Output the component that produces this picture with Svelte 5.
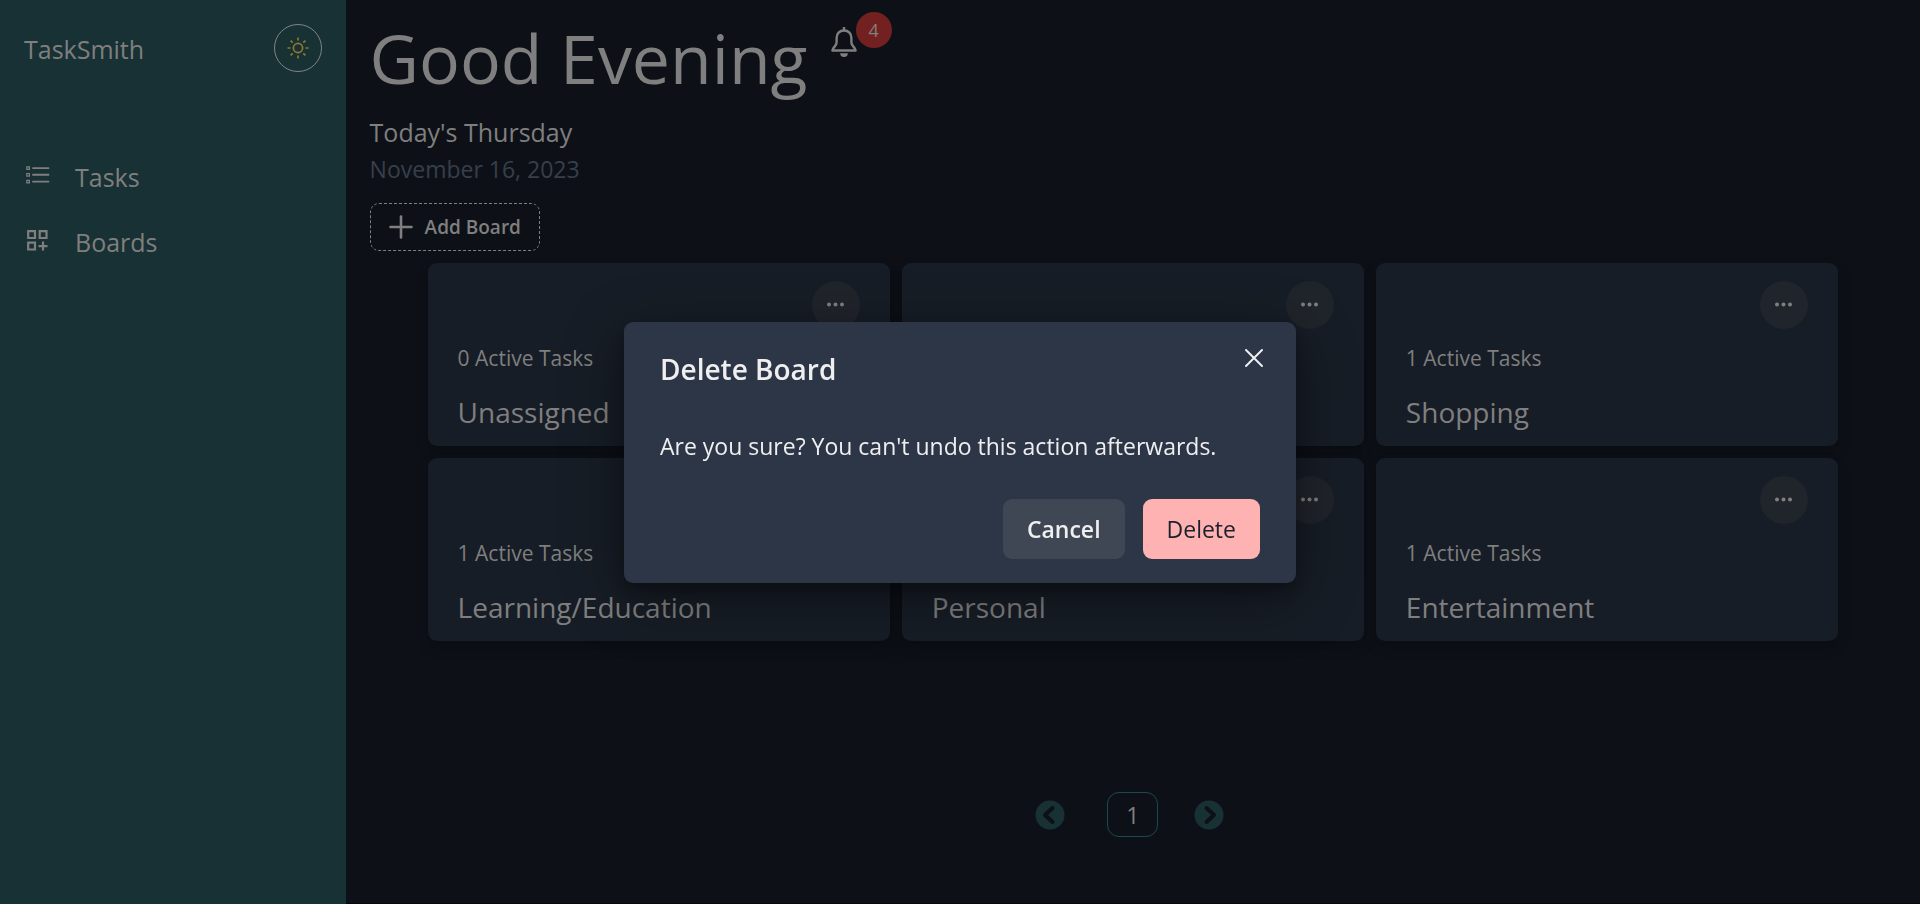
<script>
  const boards = [
    { name: 'Unassigned', tasks: 0 },
    null,
    { name: 'Shopping', tasks: 1 },
    { name: 'Learning/Education', tasks: 1 },
    { name: 'Personal' },
    { name: 'Entertainment', tasks: 1 }
  ];
</script>

<div class="app">
  <aside class="sidebar">
    <div class="brand">
      <span class="logo">TaskSmith</span>
      <button class="theme" aria-label="Toggle theme">
        <svg width="24" height="24" viewBox="0 0 24 24" fill="none" stroke="currentColor" stroke-width="1.7">
          <circle cx="12" cy="12" r="4.6" />
          <path d="M12 1.500v3M12 19.500v3M1.500 12h3M19.500 12h3M4.600 4.600l2.100 2.100M17.300 17.300l2.100 2.100M4.600 19.400l2.100-2.100M17.300 6.700l2.100-2.100" />
        </svg>
      </button>
    </div>
    <nav>
      <a href="#tasks">
        <svg width="27" height="28" viewBox="0 0 27 28" fill="none" stroke="currentColor">
          <path stroke-width="1.2" d="M2.800 3.800h2.600v2.600H2.800zM2.800 10.500h2.600v2.600H2.800zM2.800 17.300h2.600v2.600H2.800z" />
          <path stroke-width="1.9" stroke-linecap="round" d="M9 5.100h15.500M9 11.800h15.500M9 18.600h15.500" />
        </svg>
        Tasks
      </a>
      <a href="#boards">
        <svg width="27" height="28" viewBox="0 0 27 28" fill="none" stroke="currentColor" stroke-width="2.200">
          <path d="M4.200 3.200h6.800v6.800H4.200zM15.700 3.200h6.800v6.800h-6.800zM4.200 14.700h6.800v6.800H4.200zM19 13.600v9M14.500 18.100h9" />
        </svg>
        Boards
      </a>
    </nav>
  </aside>

  <main>
    <header>
      <h1>Good Evening</h1>
      <button class="bell" aria-label="Notifications">
        <svg width="32" height="32" viewBox="0 0 32 32" fill="none" stroke="currentColor" stroke-width="2.400" stroke-linejoin="round">
          <path d="M16 4.500c-4.600 0-7.400 3.100-7.400 7.400v4.600c0 3.800-4.200 4.700-4.200 8h23.200c0-3.300-4.200-4.200-4.200-8v-4.600c0-4.300-2.800-7.400-7.400-7.400z" />
          <path d="M16 1v3.500" />
          <path d="M12.200 27.200h7.600a3.800 3.800 0 0 1-7.600 0z" fill="currentColor" stroke="none" />
        </svg>
        <span class="count">4</span>
      </button>
    </header>
    <p class="day">Today's Thursday</p>
    <p class="date">November 16, 2023</p>
    <button class="add">
      <svg width="24" height="24" viewBox="0 0 24 24" fill="none" stroke="currentColor" stroke-width="2.600" stroke-linecap="round">
        <path d="M12 1.500v21M1.500 12h21" />
      </svg>
      Add Board
    </button>

    <section class="grid">
      {#each boards as board}
        <article>
          <button class="more" aria-label="Board options">
            <svg width="20" height="20" viewBox="0 0 20 20" fill="currentColor">
              <circle cx="3" cy="9.500" r="2" /><circle cx="9.500" cy="9.500" r="2" /><circle cx="16" cy="9.500" r="2" />
            </svg>
          </button>
          {#if board}
            <p class="tasks">{board.tasks === undefined ? '' : `${board.tasks} Active Tasks`}</p>
            <h2>{board.name}</h2>
          {/if}
        </article>
      {/each}
    </section>

    <div class="pager">
      <button class="arrow prev" aria-label="Previous page">
        <svg width="30" height="30" viewBox="0 0 30 30"><circle cx="15" cy="15" r="14.500" fill="currentColor" /><path d="M17.500 8l-7.500 7 7.500 7" /></svg>
      </button>
      <button class="page">1</button>
      <button class="arrow" aria-label="Next page">
        <svg width="30" height="30" viewBox="0 0 30 30"><circle cx="15" cy="15" r="14.500" fill="currentColor" /><path d="M12.500 8l7.500 7-7.500 7" /></svg>
      </button>
    </div>
  </main>
</div>

<div class="overlay">
  <div class="dialog" role="alertdialog" aria-modal="true" aria-labelledby="dialog-title" aria-describedby="dialog-text">
    <h3 id="dialog-title">Delete Board</h3>
    <button class="close" aria-label="Close">
      <svg width="20" height="20" viewBox="0 0 20 20" fill="none" stroke="currentColor" stroke-width="2" stroke-linecap="round">
        <path d="M2 2l16 16M18 2L2 18" />
      </svg>
    </button>
    <p id="dialog-text">Are you sure? You can't undo this action afterwards.</p>
    <footer>
      <button class="cancel">Cancel</button>
      <button class="delete">Delete</button>
    </footer>
  </div>
</div>

<style>
  :global(body) {
    background: #0d1117;
    color: #7f7f7f;
    font-family: 'Open Sans', 'Noto Sans', sans-serif;
  }
  * { box-sizing: border-box; }
  h1, h2, h3, p { margin: 0; font-weight: 400; }
  button { margin: 0; padding: 0; border: 0; background: none; color: inherit; font: inherit; cursor: pointer; }
  svg { display: block; flex: none; }
  .app { display: grid; grid-template-columns: 18% 1fr; min-height: 100vh; }
  .sidebar { padding: 24px; background: #183134; }
  .brand { display: flex; align-items: center; justify-content: space-between; height: 48px; font-size: 25px; }
  .logo { padding-top: 2px; }
  .theme { display: grid; place-items: center; width: 48px; height: 48px; border: 1px solid #7f8484; border-radius: 50%; color: #8a7a2c; }
  nav { display: flex; flex-direction: column; gap: 24px; margin-top: 85px; }
  nav a { display: flex; gap: 24px; color: inherit; font-size: 25px; line-height: 41px; text-decoration: none; }
  nav svg { margin-top: 6px; }
  main { display: flex; flex-direction: column; padding: 12px 24px 66px; border-bottom: 1px solid #0a0310; }
  header { display: flex; gap: 20px; }
  h1 { font-size: 68px; line-height: 92px; }
  .bell { display: flex; height: 36px; align-items: flex-start; }
  .bell svg { margin-top: 14px; }
  .count { width: 36px; height: 36px; margin-left: -4px; border-radius: 50%; background: #722120; font-size: 18px; line-height: 36px; }
  .day { margin-top: 8px; font-size: 25px; line-height: 40px; }
  .date { color: #373f4b; font-size: 23px; line-height: 34px; }
  .add { display: flex; align-items: center; align-self: flex-start; gap: 12px; height: 48px; margin-top: 17px; padding: 0 18px; border: 1px dashed #7f7f7f; border-radius: 9px; font-size: 19px; font-weight: 600; }
  .grid { display: grid; grid-template-columns: repeat(3, 1fr); gap: 12px; margin: 12px 58px 0; }
  article { display: flex; flex-direction: column; min-height: 183px; padding: 18px 30px 10px; border-radius: 9px; background: #171d26; box-shadow: 0 6px 12px rgba(0, 0, 0, 0.25); }
  .more { display: grid; flex: none; place-items: center; align-self: flex-end; width: 48px; height: 48px; border-radius: 50%; background: #20242b; }
  .tasks { min-height: 36px; margin-top: 11px; font-size: 21px; line-height: 36px; }
  h2 { margin-top: 15px; font-size: 28px; line-height: 42px; }
  .pager { display: flex; align-items: center; justify-content: center; gap: 36px; margin-top: auto; padding-right: 6px; }
  .arrow { color: #183134; }
  .prev { margin-right: 6px; }
  .arrow path { fill: none; stroke: #0d1117; stroke-width: 4; stroke-linecap: round; stroke-linejoin: round; }
  .page { width: 51px; height: 45px; border: 1px solid #1a4a49; border-radius: 12px; font-size: 23px; }
  .overlay { position: fixed; inset: 0; display: flex; align-items: center; justify-content: center; }
  .dialog { position: relative; width: 35%; padding: 24px 36px; border-radius: 9px; background: #2d3647; color: #efeff0; box-shadow: 0 15px 60px rgba(0, 0, 0, 0.4), 0 8px 16px rgba(0, 0, 0, 0.3); }
  h3 { font-size: 28px; font-weight: 600; line-height: 46px; }
  .close { position: absolute; top: 12px; right: 18px; display: grid; place-items: center; width: 48px; height: 48px; }
  .dialog p { margin-top: 36px; font-size: 23px; line-height: 36px; }
  footer { display: flex; justify-content: flex-end; gap: 18px; margin-top: 35px; }
  footer button { height: 60px; padding: 0 24px; border-radius: 9px; font-size: 23px; }
  .cancel { background: #3f4754; font-weight: 600; }
  .delete { background: #feb2b2; color: #1a202c; }
</style>
